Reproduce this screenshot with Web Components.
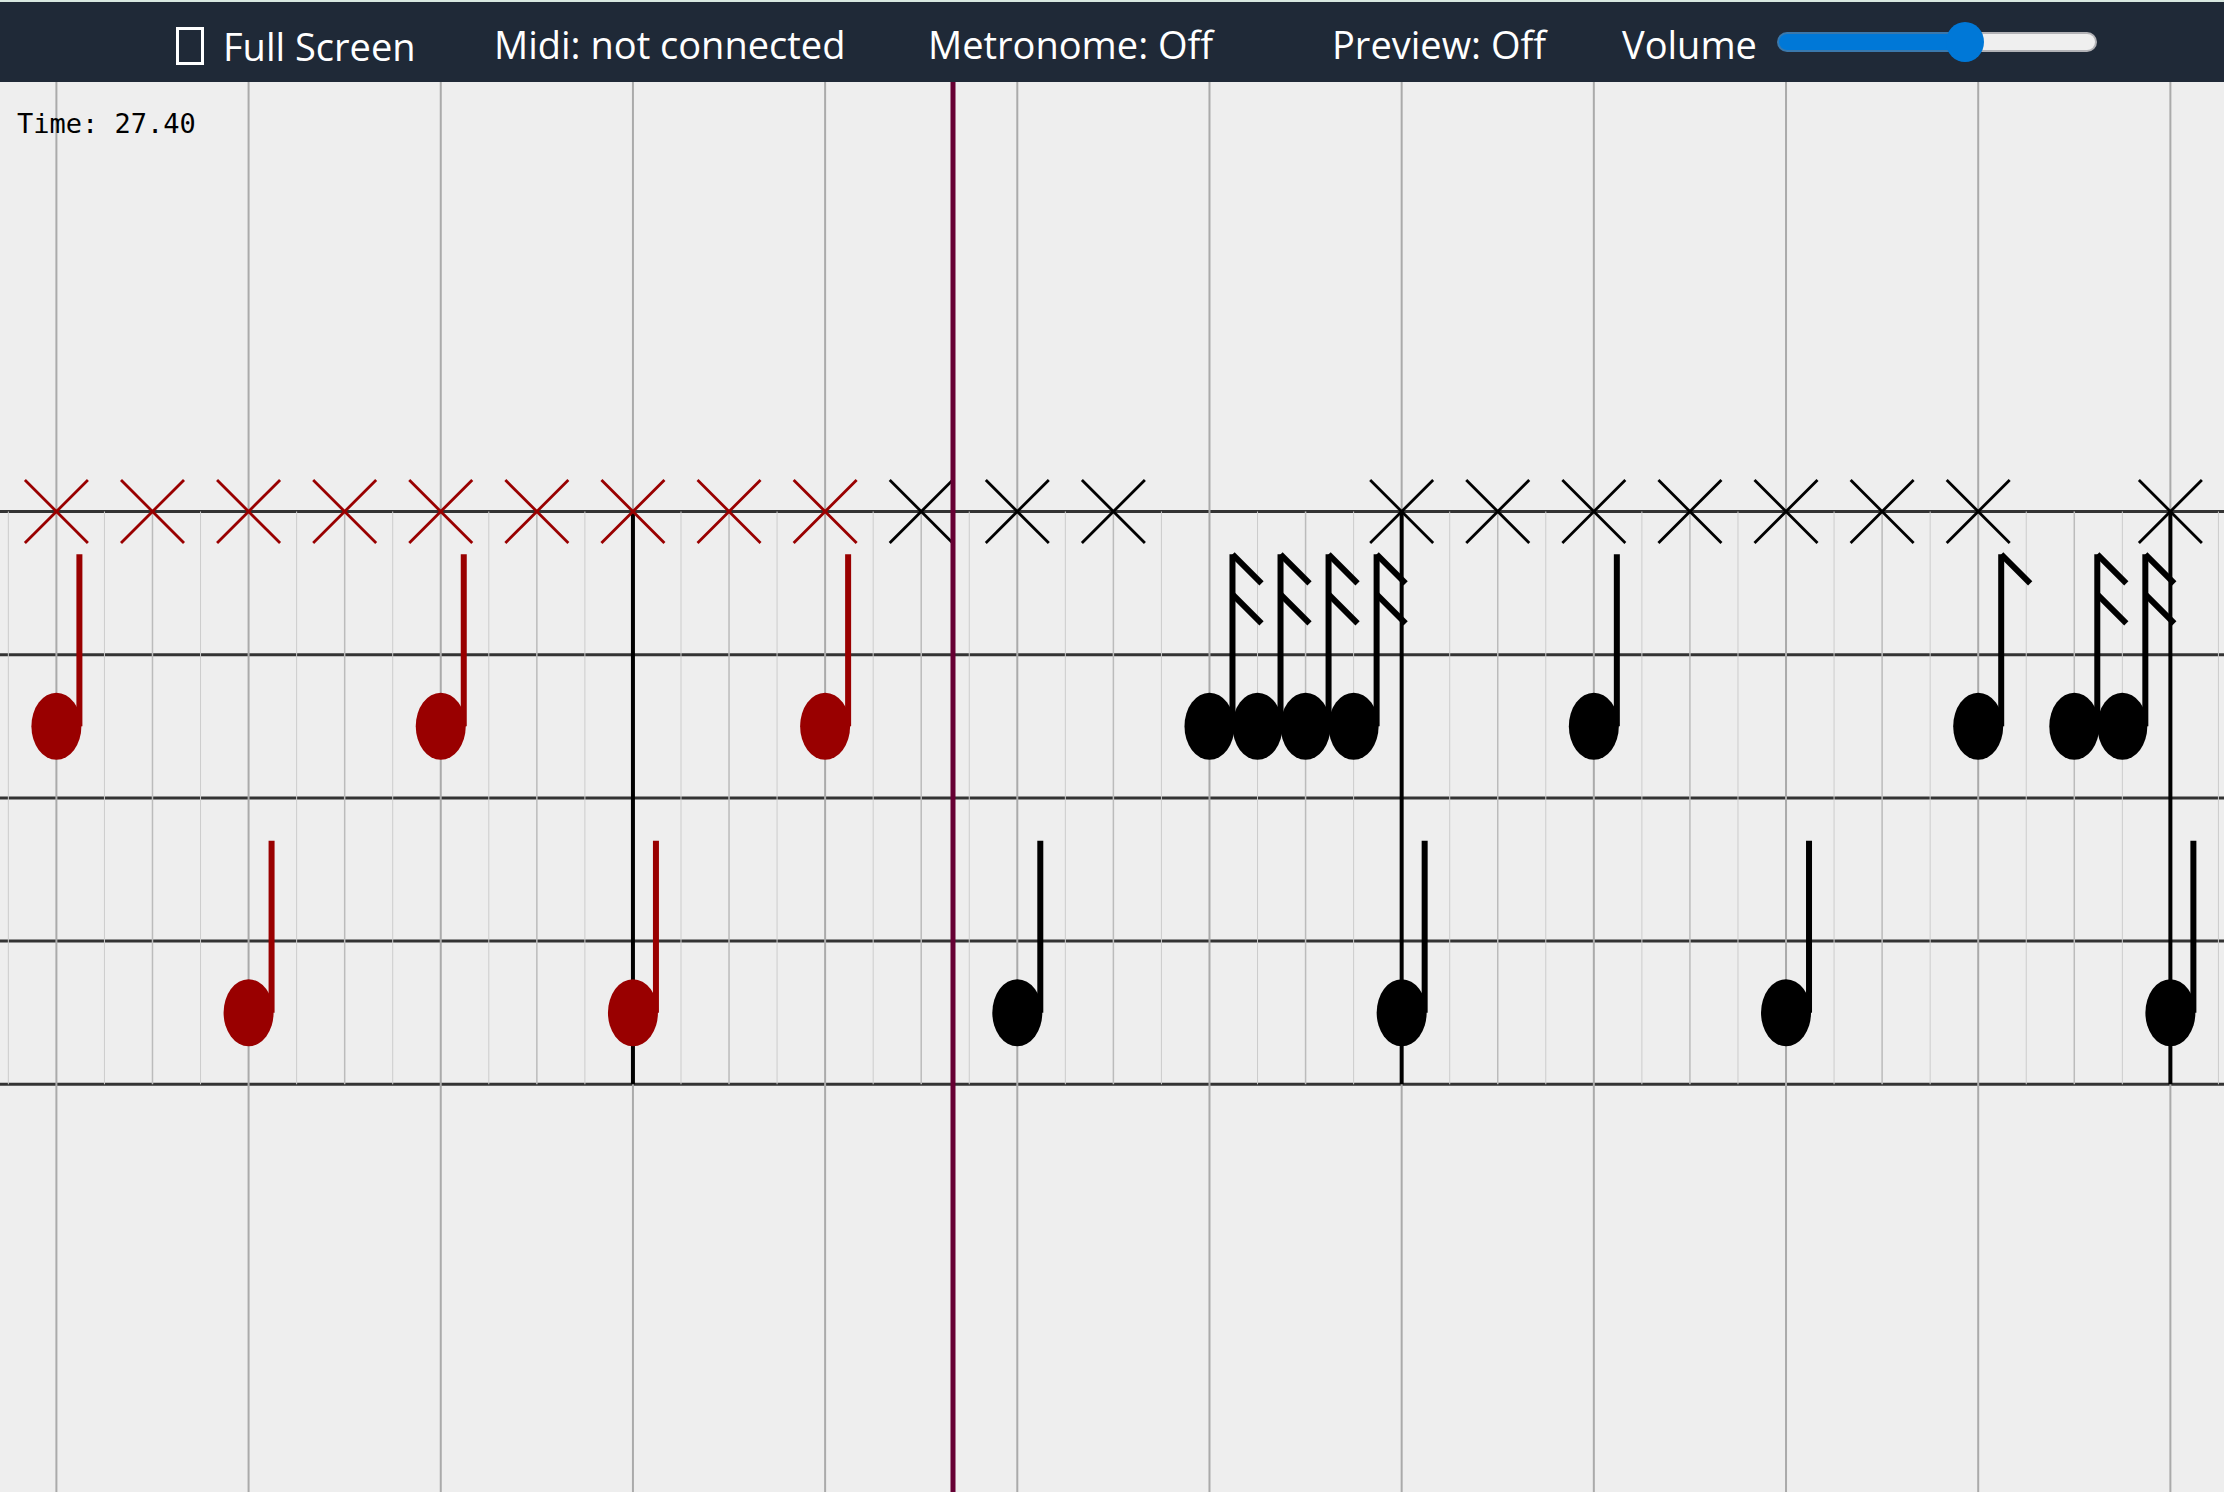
<!DOCTYPE html>
<html lang="en">
<head>
<meta charset="utf-8">
<title>Drum Trainer</title>
<style>
  html, body { margin: 0; height: 100%; }
  body { font-family: "Open Sans", "Noto Sans", sans-serif; background: #eee; overflow: hidden; }
</style>
</head>
<body>
<drum-app></drum-app>
<script>
const define = (name, html, setup) => {
  const template = document.createElement('template');
  template.innerHTML = html;
  customElements.define(name, class extends HTMLElement {
    constructor() {
      super();
      this.attachShadow({ mode: 'open' }).append(template.content.cloneNode(true));
    }
    connectedCallback() { if (setup) setup(this, this.shadowRoot); }
  });
};

define('tool-button', `
  <style>
    :host { display: block; }
    button { display: flex; align-items: center; gap: 19px; margin: 0; padding: 4px 0 0; border: 0;
      background: none; color: inherit; font: inherit; white-space: nowrap; cursor: pointer; }
  </style>
  <button type="button"><slot name="icon"></slot><slot></slot></button>`);

define('volume-slider', `
  <style>
    :host { display: flex; align-items: center; gap: 20px; --level: 60%; }
    label { padding-top: 4px; }
    input { appearance: none; -webkit-appearance: none; box-sizing: border-box; width: 320px; height: 40px; margin: 0; background: none; }
    input::-webkit-slider-runnable-track { box-sizing: border-box; height: 20px; border: 2px solid transparent; border-radius: 10px;
      background: linear-gradient(90deg, #0078d7 var(--level), #efefef var(--level)) padding-box,
                  linear-gradient(90deg, #3a78ac var(--level), #b2b2b6 var(--level)) border-box; }
    input::-webkit-slider-thumb { -webkit-appearance: none; width: 38px; height: 40px; margin-top: -12px; border: 0; border-radius: 50%; background: #0078d7; }
  </style>
  <label for="volume"><slot></slot></label>
  <input id="volume" type="range" min="0" max="100" value="60">`,
  (host, root) => {
    const input = root.querySelector('input');
    input.addEventListener('input', () => host.style.setProperty('--level', input.value + '%'));
  });

define('app-toolbar', `
  <style>
    :host { display: grid; grid-template-columns: 318fr 434fr 404fr 290fr 602fr; align-items: center;
      box-sizing: border-box; height: 82px; padding-left: 176px; border-top: 2px solid #d8e8e0;
      background: #1f2937; color: #fff; font-size: 38px; line-height: 50px; }
    tool-button.icon { padding-top: 4px; }
    svg { display: block; width: 28px; height: 38px; }
  </style>
  <tool-button class="icon"><svg slot="icon" viewBox="0 0 28 38" aria-hidden="true"><rect x="1.5" y="1.5" width="25" height="35" fill="none" stroke="#fff" stroke-width="3"/></svg>Full Screen</tool-button>
  <tool-button>Midi: not connected</tool-button>
  <tool-button>Metronome: Off</tool-button>
  <tool-button>Preview: Off</tool-button>
  <volume-slider>Volume</volume-slider>`);

define('time-readout', `
  <style>
    :host { display: block; padding: 26px 17px; color: #000; font: 27px/32px "DejaVu Sans Mono", monospace; }
  </style>
  <slot></slot>`);

define('drum-score', `
  <style>
    :host { display: grid; grid-template: minmax(0, 1fr) / minmax(0, 1fr); overflow: hidden; background: #eee; }
    svg, slot { grid-area: 1 / 1; }
    svg { display: block; width: 100%; height: 100%; }
    slot { display: block; }
  </style>
  <svg aria-label="Drum score"></svg>
  <slot></slot>`,
  (host, root) => {
    const svg = root.querySelector('svg');
    const ORIGIN = 56.4, STEP = 48.045, TOP = 429.5, ROW = 143.2, BOTTOM = TOP + ROW * 4, PLAYHEAD = 953;
    const hiHat = [0, 2, 4, 6, 8, 10, 12, 14, 16, 18, 20, 22, 28, 30, 32, 34, 36, 38, 40, 44];
    // each drum hit: sixteenth index, number of flags
    const snare = [[0, 0], [8, 0], [16, 0], [24, 2], [25, 2], [26, 2], [27, 2], [32, 0], [40, 1], [42, 2], [43, 2]];
    const kick = [[4, 0], [12, 0], [20, 0], [28, 0], [36, 0], [44, 0]];
    const x = k => ORIGIN + k * STEP;
    const colour = k => k < 17 ? '#990000' : '#000';
    const line = (x1, y1, x2, y2, c, w) => `<line x1="${x1}" y1="${y1}" x2="${x2}" y2="${y2}" stroke="${c}" stroke-width="${w}"/>`;
    const note = (k, y, flags) => {
      let s = `<ellipse cx="${x(k)}" cy="${y}" rx="25" ry="33.5" fill="${colour(k)}"/>` + line(x(k) + 23, y - 172, x(k) + 23, y, colour(k), 6);
      for (let f = 0; f < flags; f++) s += line(x(k) + 23, y - 172 + f * 40, x(k) + 52, y - 143 + f * 40, colour(k), 6);
      return s;
    };
    const draw = () => {
      const w = svg.clientWidth, h = svg.clientHeight;
      let s = '';
      for (let i = 0; i < 5; i++) s += line(0, TOP + i * ROW, w, TOP + i * ROW, '#333', 3);
      for (let k = -1; x(k) < w; k++) {
        if (k % 4 === 0) s += line(x(k), 0, x(k), h, '#aaa', 2);
        else if (k % 2 === 0) s += line(x(k), TOP, x(k), BOTTOM, '#bbb', 1.5);
        else s += line(x(k), TOP, x(k), BOTTOM, '#ccc', 1);
      }
      for (let k = 12; x(k) < w; k += 16) s += line(x(k), TOP, x(k), BOTTOM, '#000', 4);
      for (const k of hiHat) s += line(x(k) - 31.5, TOP - 31.5, x(k) + 31.5, TOP + 31.5, colour(k), 2.8)
        + line(x(k) - 31.5, TOP + 31.5, x(k) + 31.5, TOP - 31.5, colour(k), 2.8);
      for (const [k, f] of snare) s += note(k, TOP + ROW * 1.5, f);
      for (const [k, f] of kick) s += note(k, TOP + ROW * 3.5, f);
      svg.innerHTML = s + line(PLAYHEAD, 0, PLAYHEAD, h, '#660033', 5);
    };
    draw();
    new ResizeObserver(draw).observe(svg);
  });

define('drum-app', `
  <style>
    :host { display: flex; flex-direction: column; height: 100vh; }
    drum-score { flex: 1; min-height: 0; }
    app-toolbar { flex: none; }
  </style>
  <app-toolbar></app-toolbar>
  <drum-score><time-readout>Time: 27.40</time-readout></drum-score>`);
</script>
</body>
</html>
